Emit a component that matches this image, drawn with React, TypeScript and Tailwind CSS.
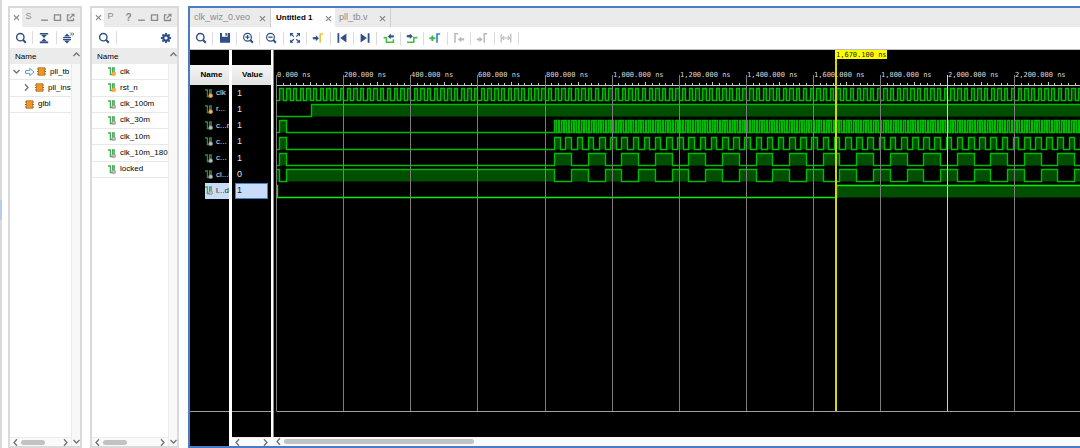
import React, { ReactNode } from "react";

/* ---------- icons ---------- */

function Svg({ size = 12, className = "", children }: { size?: number; className?: string; children: ReactNode }) {
  return (
    <svg width={size} height={size} viewBox="0 0 12 12" fill="none" stroke="currentColor" strokeWidth="1.4" className={"block shrink-0 " + className} aria-hidden="true">
      {children}
    </svg>
  );
}

const SearchIcon = () => (
  <Svg><circle cx="5.3" cy="5.2" r="3.7" /><path d="M7.9 7.8 10.8 10.8" strokeWidth="2" /></Svg>
);
const CollapseIcon = () => (
  <Svg><path d="M1.8 1.8h8.4M1.8 10.4h8.4" strokeWidth="1.6" /><path d="M3 2.8h6L6 5.9zM3 9.4h6L6 6.3z" fill="currentColor" stroke="none" /></Svg>
);
const ExpandIcon = () => (
  <Svg>
    <path d="M1 5.6h8M1 7.6h8" strokeWidth="1.2" />
    <path d="M2 4.6h6L5 1.6zM2 8.6h6l-3 3z" fill="currentColor" stroke="none" />
    <path d="M8.2.6 9.7 2.1 8.2 3.6M10.2.6l1.5 1.5-1.5 1.5" stroke="#333" strokeWidth=".8" />
  </Svg>
);
const GearIcon = () => (
  <Svg><circle cx="6" cy="6" r="2.7" strokeWidth="2.2" /><path d="M6 .9v2M6 9.1v2M.9 6h2M9.1 6h2M2.4 2.4l1.4 1.4M8.2 8.2l1.4 1.4M9.6 2.4 8.2 3.8M3.8 8.2 2.4 9.6" strokeWidth="1.9" /></Svg>
);
const SaveIcon = () => (
  <Svg><path d="M1 1h2v3.8h5.6V1H11v9.8H1z" fill="currentColor" stroke="none" /><path d="M6.4 1h1.4v2.8H6.4z" fill="currentColor" stroke="none" /></Svg>
);
const ZoomInIcon = () => (
  <Svg><circle cx="5.5" cy="5.2" r="3.9" strokeWidth="1.2" /><path d="M8.3 8 10.9 10.7" strokeWidth="2" /><path d="M3.4 5.2h4.2M5.5 3.1v4.2" strokeWidth="1.2" /></Svg>
);
const ZoomOutIcon = () => (
  <Svg><circle cx="5.5" cy="5.2" r="3.9" strokeWidth="1.2" /><path d="M8.3 8 10.9 10.7" strokeWidth="2" /><path d="M3.4 5.2h4.2" strokeWidth="1.3" /></Svg>
);
const FitIcon = () => (
  <Svg><path d="M1 1h3.6L1 4.4zM11 1H7.4L11 4.4zM1 10.8h3.6L1 7.4zM11 10.8H7.4L11 7.4z" fill="currentColor" stroke="none" /><path d="M2 2l2.8 2.6M10 2 7.2 4.6M2 9.8 4.8 7.2M10 9.8 7.2 7.2" strokeWidth="1.2" /></Svg>
);
const GoCursorIcon = () => (
  <Svg><path d="M.8 6.2h3.4" strokeWidth="2.2" /><path d="M3.8 3.2 7 6.2l-3.2 3z" fill="currentColor" stroke="none" /><path d="M8.2 10.8V2h2.8" stroke="#e8c64a" strokeWidth="1.7" /></Svg>
);
const FirstIcon = () => (
  <Svg><path d="M2.4 1.2v9.6" strokeWidth="1.8" /><path d="M10.4 1.4v9.2L4.2 6z" fill="currentColor" stroke="none" /></Svg>
);
const LastIcon = () => (
  <Svg><path d="M9.6 1.2v9.6" strokeWidth="1.8" /><path d="M1.6 1.4v9.2L7.8 6z" fill="currentColor" stroke="none" /></Svg>
);
const PrevEdgeIcon = () => (
  <Svg><path d="M.6 5.6h2.8v4.6h7V7.2" stroke="#45c043" strokeWidth="1.6" /><path d="M10.8 4.4H7.4" strokeWidth="2.2" /><path d="M7.8 1.6v5.6L4.8 4.4z" fill="currentColor" stroke="none" /></Svg>
);
const NextEdgeIcon = () => (
  <Svg><path d="M1 10.2h6.8V5.6h3.6" stroke="#45c043" strokeWidth="1.6" /><path d="M.8 4.2h3.4" strokeWidth="2.2" /><path d="M3.8 1.4V7l3-2.8z" fill="currentColor" stroke="none" /></Svg>
);
const AddMarkerIcon = () => (
  <Svg><path d="M.4 6.2h6M3.4 3.4V9" stroke="#45b649" strokeWidth="1.9" /><path d="M8 10.8V2h3.2" stroke="#3f83c4" strokeWidth="1.7" /></Svg>
);
const PrevMarkerIcon = () => (
  <Svg><path d="M2 10.8V1.8h3.2" strokeWidth="1.5" /><path d="M11.2 7.4H7.8" strokeWidth="2.1" /><path d="M8.2 4.6v5.6L5 7.4z" fill="currentColor" stroke="none" /></Svg>
);
const NextMarkerIcon = () => (
  <Svg><path d="M8.2 10.8V1.8h3" strokeWidth="1.5" /><path d="M.8 7.4h3" strokeWidth="2.1" /><path d="M3.4 4.6v5.6l3.2-2.8z" fill="currentColor" stroke="none" /></Svg>
);
const SpanIcon = () => (
  <Svg><path d="M1.2 1.8v8.6M10.8 1.8v8.6M2.4 6h7.2" strokeWidth="1.2" /><path d="M4.2 4.2 2.4 6l1.8 1.8M7.8 4.2 9.6 6 7.8 7.8" strokeWidth="1.1" /></Svg>
);
const CloseIcon = () => (
  <Svg size={9} className="text-[#8a8a8a]"><path d="M2.6 3l6.8 6.6M9.4 3 2.6 9.6" strokeWidth="1.5" /></Svg>
);
const MinIcon = () => <Svg size={9}><path d="M1.5 9.6h9" strokeWidth="1.8" /></Svg>;
const MaxIcon = () => <Svg size={9}><path d="M2 2.4h8v7.4H2z" strokeWidth="1.8" /></Svg>;
const PopIcon = () => (
  <Svg size={9}><path d="M5 2.4H2v7.6h8V7" strokeWidth="1.7" /><path d="M5 7l5-5M7 1.6h3.6V5" strokeWidth="1.5" /></Svg>
);
const Chevron = ({ dir }: { dir: "up" | "down" | "left" | "right" }) => {
  const d = {
    up: "M2 8l4-4 4 4",
    down: "M2 4l4 4 4-4",
    left: "M8 1.6 4 6l4 4.4",
    right: "M4 1.6 8 6l-4 4.4",
  }[dir];
  return <Svg size={9} className="text-[#707070]"><path d={d} strokeWidth="1.7" /></Svg>;
};
const ScopeArrow = () => (
  <svg width="10" height="10" viewBox="0 0 10 10" fill="#fff" stroke="#4f9fb8" strokeWidth="1" className="block shrink-0" aria-hidden="true">
    <path d="M.6 3.6h4.2V1.4L9 5 4.8 8.6V6.4H.6z" />
  </svg>
);
const Chip = () => (
  <svg width="9" height="9" viewBox="0 0 9 9" className="block shrink-0" aria-hidden="true">
    <path d="M0 2h9M0 4.5h9M0 7h9" stroke="#666" strokeWidth="1" />
    <rect x="1.3" y=".8" width="6.4" height="7.4" fill="#f7941d" stroke="#a8702c" strokeWidth=".8" />
  </svg>
);
const SignalIcon = ({ input, dark }: { input?: boolean; dark?: boolean }) => (
  <svg width="8" height="9" viewBox="0 0 8 9" fill="none" className="block shrink-0" aria-hidden="true">
    <path d="M0 1h2.4v6.6h2.2V.8h1.6v5" stroke={dark ? "#2c8a3c" : "#45ab54"} strokeWidth="1.3" />
    <circle cx="5.7" cy="6.7" r="1.9" fill={input ? "#f9b04f" : "#bdbdbd"} stroke={input ? "#e8922a" : "#8a8a8a"} strokeWidth=".7" />
  </svg>
);

/* ---------- shared pieces ---------- */

function IconButton({ label, disabled, children }: { label: string; disabled?: boolean; children: ReactNode }) {
  return (
    <button type="button" aria-label={label} disabled={disabled} className="flex items-center justify-center text-[#2f4f86] disabled:text-[#b9b9b9]">
      {children}
    </button>
  );
}

function HScroll({ children }: { children?: ReactNode }) {
  return (
    <div className="flex h-[9px] shrink-0 items-center justify-between border-t border-[#ececec] bg-[#fafafa] px-px">
      <button type="button" aria-label="Scroll left"><Chevron dir="left" /></button>
      <div className="flex-1 px-px">{children}</div>
      <button type="button" aria-label="Scroll right"><Chevron dir="right" /></button>
    </div>
  );
}

function Panel({ title, className, help, toolbar, children }: { title: string; className: string; help?: boolean; toolbar: ReactNode; children: ReactNode }) {
  return (
    <section className={"flex shrink-0 flex-col border-2 border-[#dadada] bg-white " + className}>
      <header className="flex h-[19px] shrink-0 items-stretch bg-[#ebebeb] pr-[3px] text-[#8a8a8a]">
        <button type="button" aria-label="Close panel" className="flex w-3 items-center justify-center bg-white"><CloseIcon /></button>
        <h2 className="flex w-[13px] items-center justify-center pb-0.5 text-[9px] leading-none">{title}</h2>
        <div className="ml-auto flex">
          {help && <button type="button" className="w-[13px] text-[10px] font-bold leading-none">?</button>}
          <button type="button" aria-label="Minimize" className="flex w-[13px] items-center justify-center"><MinIcon /></button>
          <button type="button" aria-label="Maximize" className="flex w-[13px] items-center justify-center"><MaxIcon /></button>
          <button type="button" aria-label="Float" className="flex w-[13px] items-center justify-center"><PopIcon /></button>
        </div>
      </header>
      <div className="flex h-[21px] shrink-0 items-center">{toolbar}</div>
      <div className="flex min-h-0 flex-1">
        <div className="flex min-w-0 flex-1 flex-col">
          <div className="flex h-4 shrink-0 items-center bg-[#ebebeb] pl-[5px] pt-px text-[8px] text-black">Name</div>
          <div className="flex-1 overflow-hidden">{children}</div>
          <HScroll><div className="h-[5px] w-6 rounded-full bg-[#c2c2c2]" /></HScroll>
        </div>
        <div className="flex w-[9px] shrink-0 flex-col justify-between border-l border-[#ececec] bg-[#f8f8f8]">
          <button type="button" aria-label="Scroll up" className="h-4 bg-[#ebebeb] pb-1"><Chevron dir="up" /></button>
          <button type="button" aria-label="Scroll down"><Chevron dir="down" /></button>
        </div>
      </div>
    </section>
  );
}

const treeRow = "flex items-center gap-1 overflow-hidden whitespace-nowrap border-b border-[#e8e8e8] text-[8px] leading-none text-black";

/* ---------- waveform ---------- */

const END = 6000;
const X0 = 2.6;
const SCALE = 0.3355;
const px = (t: number) => Math.round(X0 + t * SCALE - 0.5) + 0.5;

type Edge = [number, 0 | 1];

function periodic(start: number, period: number, first: 0 | 1): Edge[] {
  const out: Edge[] = [];
  let level: 0 | 1 = first;
  for (let i = 0; start + (i * period) / 2 < END; i++) {
    out.push([start + (i * period) / 2, level]);
    level = level ? 0 : 1;
  }
  return out;
}

const LOCK = 829;
type Signal = { name: string; value: string; input?: boolean; selected?: boolean; edges: Edge[] };

const signals: Signal[] = [
  { name: "clk", value: "1", input: true, edges: [[0, 0], ...periodic(10, 20, 1)] },
  { name: "r...", value: "1", input: true, edges: [[0, 0], [105, 1]] },
  { name: "c...m", value: "1", edges: [[0, 0], [10, 1], [30, 0], ...periodic(LOCK, 10, 1)] },
  { name: "c...", value: "1", edges: [[0, 0], [10, 1], [30, 0], ...periodic(LOCK, 100 / 3, 1)] },
  { name: "c...", value: "1", edges: [[0, 0], [10, 1], [30, 0], ...periodic(LOCK, 100, 1)] },
  { name: "cl...0", value: "0", edges: [[0, 1], [10, 0], [30, 1], ...periodic(LOCK, 100, 0)] },
  { name: "l...d", value: "1", selected: true, edges: [[0, 1], [2, 0], [1670.1, 1]] },
];

const rowTop = [38.5, 54.5, 70.5, 87.5, 103.5, 119.5, 135.5];
const ROW_H = 12;

function Wave({ signal, top }: { signal: Signal; top: number }) {
  const low = top + ROW_H;
  const y = (l: 0 | 1) => (l ? top : low);
  let line = "";
  let fill = "";
  signal.edges.forEach(([t, l], i) => {
    const x = px(t);
    const next = i + 1 < signal.edges.length ? px(signal.edges[i + 1][0]) : px(END);
    line += (i ? "V" : "M" + x + " ") + y(l) + "H" + next;
    if (l) fill += `M${x} ${top}H${next}V${low}H${x}Z`;
  });
  return (
    <g>
      <path d={fill} fill="#004f00" />
      <path d={line} fill="none" stroke={signal.selected ? "#00f000" : "#00bc00"} strokeWidth="1.4" />
    </g>
  );
}

function WaveCanvas() {
  const ticks = Array.from({ length: END / 20 }, (_, i) => i * 20);
  const majors = Array.from({ length: END / 200 }, (_, i) => i * 200);
  const cursor = Math.floor(X0 + 1670.1 * SCALE);
  const label = (t: number) => t.toLocaleString("en-US") + ".000 ns";
  return (
    <svg width="100%" height="387" className="block" role="img" aria-label="Waveforms">
      {signals.map((s, i) => <Wave key={i} signal={s} top={rowTop[i]} />)}
      <g stroke="#c8c8c8">
        {ticks.map((t) => <path key={t} d={`M${px(t)} ${t % 100 ? 33 : 32}V35.5`} />)}
        <path d={`M${px(0)} 35.5H${px(END)}`} />
      </g>
      <g fill="#d8d8d8" fontFamily='"DejaVu Sans Mono", monospace' fontSize="7">
        {majors.map((t) => (
          <g key={t}>
            <path d={`M${px(t)} 25V361`} stroke={t === 2000 ? "#cfcfcf" : "#7c7c7c"} />
            <text x={px(t) + 0.5} y="27">{label(t)}</text>
          </g>
        ))}
      </g>
      <path d={`M${px(0)} 361.5H${px(END)}`} stroke="#a0a0a0" />
      <path d={`M${cursor} 0V361`} stroke="#d6d600" strokeWidth="2" />
      <rect x={cursor - 1} y="0" width="52" height="9" fill="#ffff00" />
      <text x={cursor} y="7" fill="#222" fontFamily='"DejaVu Sans Mono", monospace' fontSize="7">1,670.100 ns</text>
    </svg>
  );
}

/* ---------- page ---------- */

const tools: { label: string; icon: ReactNode; disabled?: boolean }[] = [
  { label: "Search", icon: <SearchIcon /> },
  { label: "Save", icon: <SaveIcon /> },
  { label: "Zoom in", icon: <ZoomInIcon /> },
  { label: "Zoom out", icon: <ZoomOutIcon /> },
  { label: "Zoom fit", icon: <FitIcon /> },
  { label: "Go to cursor", icon: <GoCursorIcon /> },
  { label: "Go to start", icon: <FirstIcon /> },
  { label: "Go to end", icon: <LastIcon /> },
  { label: "Previous transition", icon: <PrevEdgeIcon /> },
  { label: "Next transition", icon: <NextEdgeIcon /> },
  { label: "Add marker", icon: <AddMarkerIcon /> },
  { label: "Previous marker", icon: <PrevMarkerIcon />, disabled: true },
  { label: "Next marker", icon: <NextMarkerIcon />, disabled: true },
  { label: "Swap cursors", icon: <SpanIcon />, disabled: true },
];

const objects = ["clk", "rst_n", "clk_100m", "clk_30m", "clk_10m", "clk_10m_180", "locked"];
const columnHead = "mt-[15px] flex h-5 shrink-0 items-center justify-center bg-gradient-to-b from-[#f4f4f4] to-[#e2e2e2] text-[8px] font-bold text-black";

export default function App() {
  return (
    <div className="flex h-screen overflow-hidden bg-white pt-1.5 font-['Liberation_Sans',Arial,sans-serif] text-[#222]">
      <div className="-mt-1.5 mr-1.5 flex w-0.5 shrink-0 flex-col bg-[#dadada]">
        <div className="mt-[200px] h-5 bg-[#b9cbea]" />
      </div>

      <Panel
        title="S"
        className="mr-2 w-[74px]"
        toolbar={
          <div className="grid h-[13px] flex-1 grid-cols-3 divide-x divide-[#dcdcdc]">
            <IconButton label="Search"><SearchIcon /></IconButton>
            <IconButton label="Collapse all"><CollapseIcon /></IconButton>
            <IconButton label="Expand all"><ExpandIcon /></IconButton>
          </div>
        }
      >
        <ul className="grid h-[49px] grid-rows-3">
          <li className={treeRow + " pl-0.5"}>
            <button type="button" aria-label="Collapse pll_tb"><Chevron dir="down" /></button>
            <span className="flex items-center gap-0.5"><ScopeArrow /><Chip /></span>
            pll_tb
          </li>
          <li className={treeRow + " pl-3"}>
            <button type="button" aria-label="Expand pll_inst"><Chevron dir="right" /></button>
            <Chip />
            pll_inst
          </li>
          <li className={treeRow + " pl-[15px]"}><Chip />glbl</li>
        </ul>
      </Panel>

      <Panel
        title="P"
        help
        className="mr-[9px] w-[89px]"
        toolbar={
          <div className="flex h-[13px] flex-1 justify-between pr-[5px]">
            <div className="flex w-[25px] justify-center border-r border-[#dcdcdc]"><IconButton label="Search"><SearchIcon /></IconButton></div>
            <IconButton label="Settings"><GearIcon /></IconButton>
          </div>
        }
      >
        <ul className="grid h-[114px] grid-rows-7">
          {objects.map((n, i) => (
            <li key={n} className={treeRow + " pl-4"}><SignalIcon input={i < 2} />{n}</li>
          ))}
        </ul>
      </Panel>

      <main className="flex min-w-0 flex-1 flex-col border-y-2 border-l-2 border-[#4a7bc8] bg-white">
        <nav className="flex h-[19px] shrink-0 bg-[#ebebeb] text-[#8a8a8a]">
          <div className="flex w-[81px] items-center justify-between border-r border-[#cfcfcf] px-1">
            <a href="#veo" className="text-[9px] leading-none">clk_wiz_0.veo</a>
            <button type="button" aria-label="Close clk_wiz_0.veo" className="-mr-1 w-3 pt-px"><CloseIcon /></button>
          </div>
          <div className="flex w-16 items-center justify-between bg-white pl-[5px]">
            <a href="#wave" className="text-[8px] font-bold leading-none text-black">Untitled 1</a>
            <button type="button" aria-label="Close Untitled 1" className="w-[11px] pt-px"><CloseIcon /></button>
          </div>
          <div className="flex w-14 items-center justify-between border-r border-[#cfcfcf] pl-1">
            <a href="#tb" className="text-[9px] leading-none">pll_tb.v</a>
            <button type="button" aria-label="Close pll_tb.v" className="w-3 pt-px"><CloseIcon /></button>
          </div>
        </nav>
        <div className="flex h-[23px] shrink-0 items-center border-b border-[#bdbdbd]">
          <div className="grid h-[13px] w-[329px] grid-cols-14 divide-x divide-[#dcdcdc] border-r border-[#dcdcdc]">
            {tools.map((t) => <IconButton key={t.label} label={t.label} disabled={t.disabled}>{t.icon}</IconButton>)}
          </div>
        </div>

        <div className="flex min-h-0 flex-1">
          <div className="flex w-[39px] shrink-0 flex-col overflow-hidden bg-black">
            <div className={columnHead + " pl-1"}>Name</div>
            <ul className="grid h-[114px] shrink-0 grid-rows-7 pl-[15px]">
              {signals.map((s, i) => (
                <li key={i} className={"flex items-center gap-[3px] overflow-hidden whitespace-nowrap text-[8px] leading-none " + (s.selected ? "bg-[#c9dcfb] text-[#222]" : "text-[#e0e0e0]")}>
                  <SignalIcon input={s.input} dark={!s.selected} />{s.name}
                </li>
              ))}
            </ul>
            <div className="h-[213px] shrink-0 border-b border-[#a0a0a0]" />
          </div>

          <div className="ml-[3px] flex w-[39px] shrink-0 flex-col">
            <div className="flex min-h-0 flex-1 flex-col overflow-hidden bg-black">
              <div className={columnHead + " pl-0.5"}>Value</div>
              <ul className="grid h-[114px] shrink-0 grid-rows-7 pl-[3px] pr-[3px]">
                {signals.map((s, i) => (
                  <li key={i} className={"flex items-center border pl-px text-[9px] leading-none " + (s.selected ? "border-[#3f86c6] bg-[#c9dcfb] text-[#222]" : "border-transparent text-[#e0e0e0]")}>
                    {s.value}
                  </li>
                ))}
              </ul>
              <div className="h-[213px] shrink-0 border-b border-[#a0a0a0]" />
            </div>
            <HScroll />
          </div>

          <div className="ml-0.5 flex min-w-0 flex-1 flex-col">
            <div className="min-h-0 flex-1 overflow-hidden border-l border-[#8a8a8a] bg-black"><WaveCanvas /></div>
            <div className="flex h-[9px] shrink-0 items-center gap-px bg-[#fafafa] pl-px">
              <button type="button" aria-label="Scroll waveform left"><Chevron dir="left" /></button>
              <div className="h-[5px] w-[190px] rounded-full bg-[#c2c2c2]" />
            </div>
          </div>
        </div>
      </main>
    </div>
  );
}
